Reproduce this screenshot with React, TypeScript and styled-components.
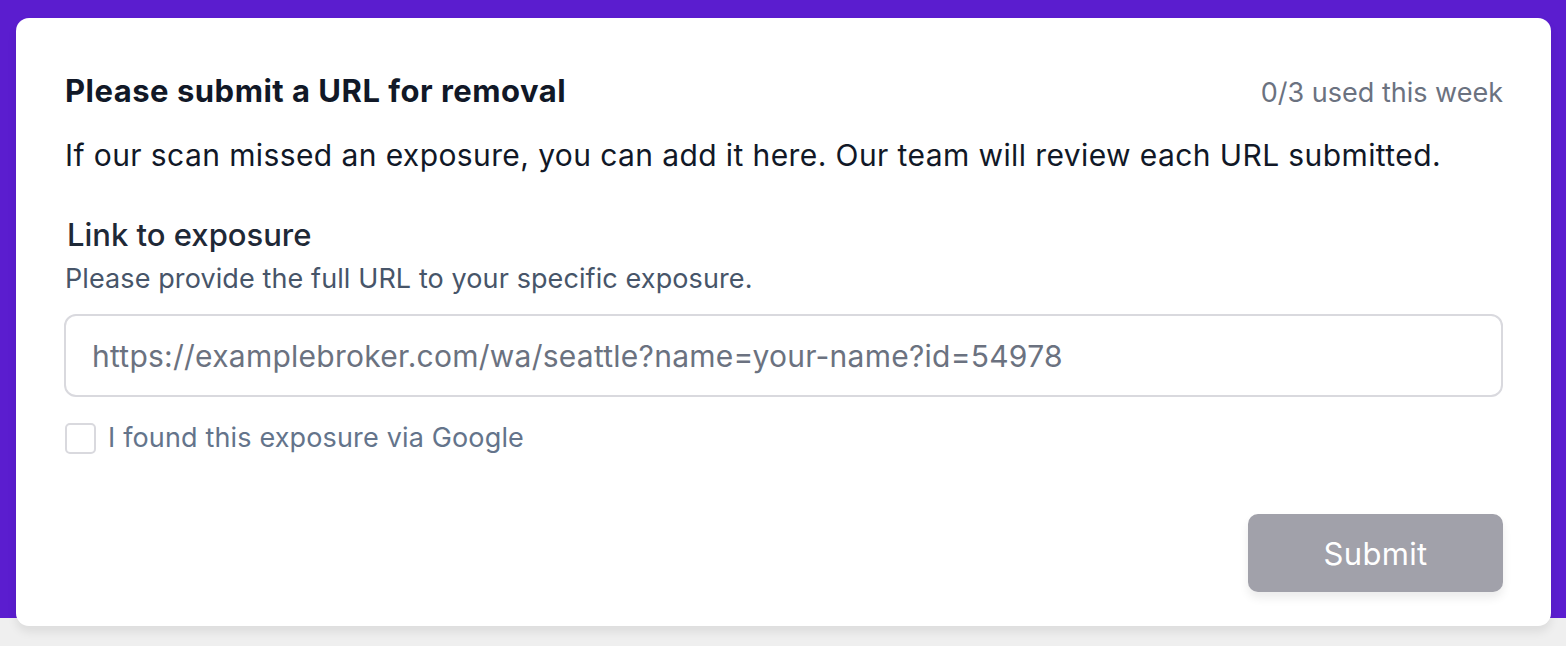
import React from 'react';
import styled, { createGlobalStyle } from 'styled-components';

const GlobalStyle = createGlobalStyle`
    html, body {
        margin: 0;
        padding: 0;
        background: #efefef;
    }
    * {
        box-sizing: border-box;
    }
`

const Page = styled.div`
    width: 1566px;
    height: 646px;
    padding: 18px 15px 0 16px;
    background: linear-gradient(to bottom, #5b1dcf 618px, #efefef 618px);
    font-family: Inter, "Noto Sans", sans-serif;
    overflow: hidden;
`

const Card = styled.form`
    display: flex;
    flex-direction: column;
    height: 608px;
    padding: 55px 48px 0 49px;
    background: #ffffff;
    border-radius: 13px;
    box-shadow: 0 6px 10px rgba(0, 0, 0, 0.08);
`

const Header = styled.div`
    display: flex;
    justify-content: space-between;
    align-items: baseline;
`

const Title = styled.h2`
    margin: 0;
    font-size: 31px;
    line-height: 36px;
    font-weight: 700;
    letter-spacing: 0.5px;
    color: #111827;
`

const Quota = styled.span`
    font-size: 27px;
    color: #6b7280;
`

const Intro = styled.p`
    margin: 28px 0 0;
    font-size: 30px;
    line-height: 36px;
    letter-spacing: 0.4px;
    color: #111827;
`

const Field = styled.div`
    display: flex;
    flex-direction: column;
    margin-top: 44px;
`

const Label = styled.label`
    margin-left: 2px;
    font-size: 31px;
    line-height: 36px;
    font-weight: 500;
    color: #1f2937;
`

const Hint = styled.span`
    margin-top: 10px;
    font-size: 27px;
    line-height: 32px;
    letter-spacing: 0.1px;
    color: #475569;
`

const UrlInput = styled.input`
    margin: 19px 0 0 -1px;
    height: 83px;
    padding: 0 26px;
    border: 2px solid #d9d9de;
    border-radius: 12px;
    font-family: inherit;
    font-size: 30px;
    letter-spacing: 0.25px;
    color: #111827;
    outline: none;
    &::placeholder {
        color: #6b7280;
    }
`

const CheckRow = styled.label`
    display: flex;
    align-items: center;
    gap: 12px;
    margin-top: 25px;
    font-size: 27px;
    line-height: 32px;
    letter-spacing: 0.15px;
    color: #64748b;
    cursor: pointer;
`

const Box = styled.input`
    appearance: none;
    width: 31px;
    height: 31px;
    margin: 0;
    border: 2px solid #d9d9de;
    border-radius: 5px;
    background: #fff;
`

const Footer = styled.div`
    display: flex;
    justify-content: flex-end;
    margin-top: 60px;
`

const SubmitBtn = styled.button`
    width: 255px;
    height: 78px;
    border: none;
    border-radius: 10px;
    background: #a1a1aa;
    color: #ffffff;
    font-family: inherit;
    font-size: 31px;
    letter-spacing: 0.3px;
    box-shadow: 0 6px 10px rgba(0, 0, 0, 0.08);
`

function App() {
    return (
        <>
            <GlobalStyle />
            <Page>
                <Card onSubmit={(e) => e.preventDefault()}>
                    <Header>
                        <Title>Please submit a URL for removal</Title>
                        <Quota>0/3 used this week</Quota>
                    </Header>
                    <Intro>If our scan missed an exposure, you can add it here. Our team will review each URL submitted.</Intro>
                    <Field>
                        <Label htmlFor="exposure-url">Link to exposure</Label>
                        <Hint>Please provide the full URL to your specific exposure.</Hint>
                        <UrlInput id="exposure-url" placeholder="https://examplebroker.com/wa/seattle?name=your-name?id=54978" />
                    </Field>
                    <CheckRow>
                        <Box type="checkbox" />
                        I found this exposure via Google
                    </CheckRow>
                    <Footer>
                        <SubmitBtn type="submit" disabled>Submit</SubmitBtn>
                    </Footer>
                </Card>
            </Page>
        </>
    )
}

export default App
